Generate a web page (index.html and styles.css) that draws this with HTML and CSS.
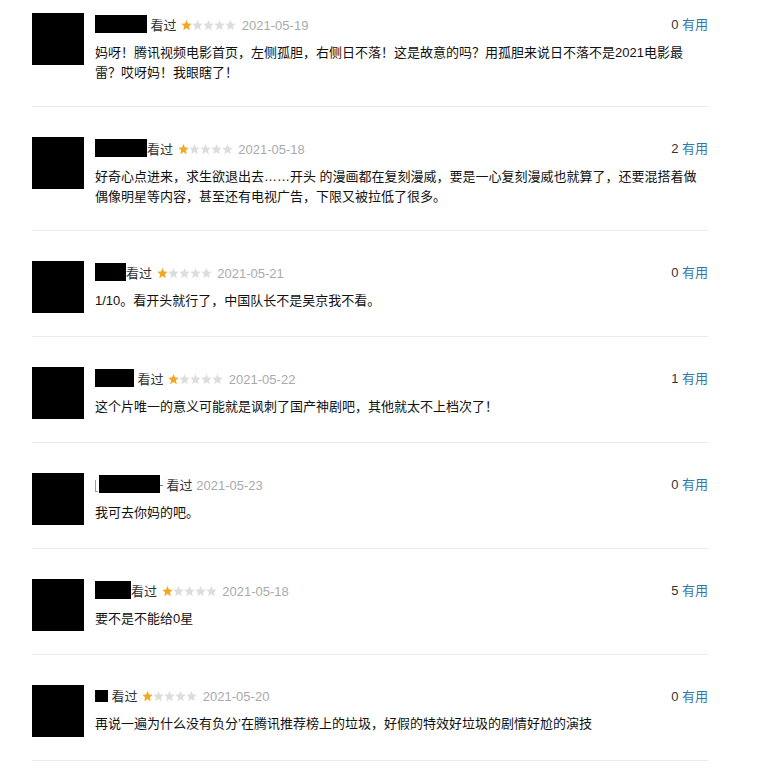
FILE: index.html
```html
<!DOCTYPE html>
<html lang="zh-CN">
<head>
    <meta charset="UTF-8">
    <meta name="viewport" content="width=device-width, initial-scale=1.0">
    <title>短评</title>
    <link rel="stylesheet" href="styles.css">
</head>
<body>

<svg class="defs" width="0" height="0">
    <defs>
        <polygon id="star" points="5.5,0 6.97,3.48 10.73,3.8 7.88,6.27 8.73,10.3 5.5,8.1 2.27,10.3 3.12,6.27 0.27,3.8 4.03,3.48"/>
        <g id="rating1">
            <use href="#star" fill="#f5a623"/>
            <use href="#star" x="11" fill="#dddddd"/>
            <use href="#star" x="22" fill="#dddddd"/>
            <use href="#star" x="33" fill="#dddddd"/>
            <use href="#star" x="44" fill="#dddddd"/>
        </g>
    </defs>
</svg>

<div class="comments">

    <div class="comment">
        <div class="avatar"></div>
        <div class="comment-body">
            <div class="comment-head">
                <span class="info">
                    <span class="name" style="width:52px"></span> 看过
                    <svg class="stars" viewBox="0 0 55 11"><use href="#rating1"/></svg>
                    <span class="time">2021-05-19</span>
                </span>
                <span class="votes"><span class="count">0</span> <a href="#">有用</a></span>
            </div>
            <p class="short">妈呀！腾讯视频电影首页，左侧孤胆，右侧日不落！这是故意的吗？用孤胆来说日不落不是2021电影最<br>雷？哎呀妈！我眼瞎了！</p>
        </div>
    </div>

    <div class="comment">
        <div class="avatar"></div>
        <div class="comment-body">
            <div class="comment-head">
                <span class="info">
                    <span class="name" style="width:52px"></span>看过
                    <svg class="stars" viewBox="0 0 55 11"><use href="#rating1"/></svg>
                    <span class="time">2021-05-18</span>
                </span>
                <span class="votes"><span class="count">2</span> <a href="#">有用</a></span>
            </div>
            <p class="short">好奇心点进来，求生欲退出去……开头 的漫画都在复刻漫威，要是一心复刻漫威也就算了，还要混搭着做<br>偶像明星等内容，甚至还有电视广告，下限又被拉低了很多。</p>
        </div>
    </div>

    <div class="comment">
        <div class="avatar"></div>
        <div class="comment-body">
            <div class="comment-head">
                <span class="info">
                    <span class="name" style="width:31px"></span>看过
                    <svg class="stars" viewBox="0 0 55 11"><use href="#rating1"/></svg>
                    <span class="time">2021-05-21</span>
                </span>
                <span class="votes"><span class="count">0</span> <a href="#">有用</a></span>
            </div>
            <p class="short">1/10。看开头就行了，中国队长不是吴京我不看。</p>
        </div>
    </div>

    <div class="comment">
        <div class="avatar"></div>
        <div class="comment-body">
            <div class="comment-head">
                <span class="info">
                    <span class="name" style="width:39px"></span> 看过
                    <svg class="stars" viewBox="0 0 55 11"><use href="#rating1"/></svg>
                    <span class="time">2021-05-22</span>
                </span>
                <span class="votes"><span class="count">1</span> <a href="#">有用</a></span>
            </div>
            <p class="short">这个片唯一的意义可能就是讽刺了国产神剧吧，其他就太不上档次了！</p>
        </div>
    </div>

    <div class="comment">
        <div class="avatar"></div>
        <div class="comment-body">
            <div class="comment-head">
                <span class="info">
                    <span class="name-edge"></span><span class="name" style="width:61px"></span><span class="name-tail"></span> 看过
                    <span class="time">2021-05-23</span>
                </span>
                <span class="votes"><span class="count">0</span> <a href="#">有用</a></span>
            </div>
            <p class="short">我可去你妈的吧。</p>
        </div>
    </div>

    <div class="comment">
        <div class="avatar"></div>
        <div class="comment-body">
            <div class="comment-head">
                <span class="info">
                    <span class="name" style="width:36px"></span>看过
                    <svg class="stars" viewBox="0 0 55 11"><use href="#rating1"/></svg>
                    <span class="time">2021-05-18</span>
                </span>
                <span class="votes"><span class="count">5</span> <a href="#">有用</a></span>
            </div>
            <p class="short">要不是不能给0星</p>
        </div>
    </div>

    <div class="comment">
        <div class="avatar"></div>
        <div class="comment-body">
            <div class="comment-head">
                <span class="info">
                    <span class="name name-small" style="width:13px"></span> 看过
                    <svg class="stars" viewBox="0 0 55 11"><use href="#rating1"/></svg>
                    <span class="time">2021-05-20</span>
                </span>
                <span class="votes"><span class="count">0</span> <a href="#">有用</a></span>
            </div>
            <p class="short">再说一遍为什么没有负分’在腾讯推荐榜上的垃圾，好假的特效好垃圾的剧情好尬的演技</p>
        </div>
    </div>

</div>

</body>
</html>
```

FILE: styles.css
```css
body {
    margin: 0;
    background: #fff;
    font-family: "Liberation Sans", Arial, "Noto Sans CJK SC", sans-serif;
    font-size: 13px;
    color: #111;
}
.defs {
    position: absolute;
}
.comments {
    width: 676px;
    margin-left: 32px;
}
.comment {
    display: flex;
    padding: 30px 0 23px;
    border-bottom: 1px solid #ebebeb;
}
.comment:first-child {
    padding-top: 13px;
}
.avatar {
    flex: none;
    width: 52px;
    height: 52px;
    background: #000;
}
.comment-body {
    flex: 1;
    margin-left: 11px;
}
.comment-head {
    display: flex;
    justify-content: space-between;
    margin-top: 2px;
    line-height: 20px;
}
.info {
    color: #333;
}
.name {
    display: inline-block;
    height: 18px;
    background: #000;
    vertical-align: -3px;
}
.name-small {
    height: 12px;
    vertical-align: -1px;
}
/* bits of the username left visible beside the black box */
.name-edge {
    display: inline-block;
    width: 3px;
    height: 12px;
    margin-right: 1px;
    border-left: 1px solid #8aa2b6;
    border-bottom: 1px solid #8aa2b6;
    box-sizing: border-box;
    vertical-align: -2px;
}
.name-tail {
    display: inline-block;
    width: 3px;
    height: 1px;
    background: #5b87ab;
    vertical-align: 4px;
}
.stars {
    width: 55px;
    height: 11px;
    margin: 0 2px 0 1px;
    vertical-align: -1px;
}
.time {
    color: #aaa;
}
.votes {
    color: #333;
}
.votes a {
    color: #37a;
    text-decoration: none;
}
.short {
    margin: 7px 0 0;
    line-height: 20px;
    color: #111;
}
```
